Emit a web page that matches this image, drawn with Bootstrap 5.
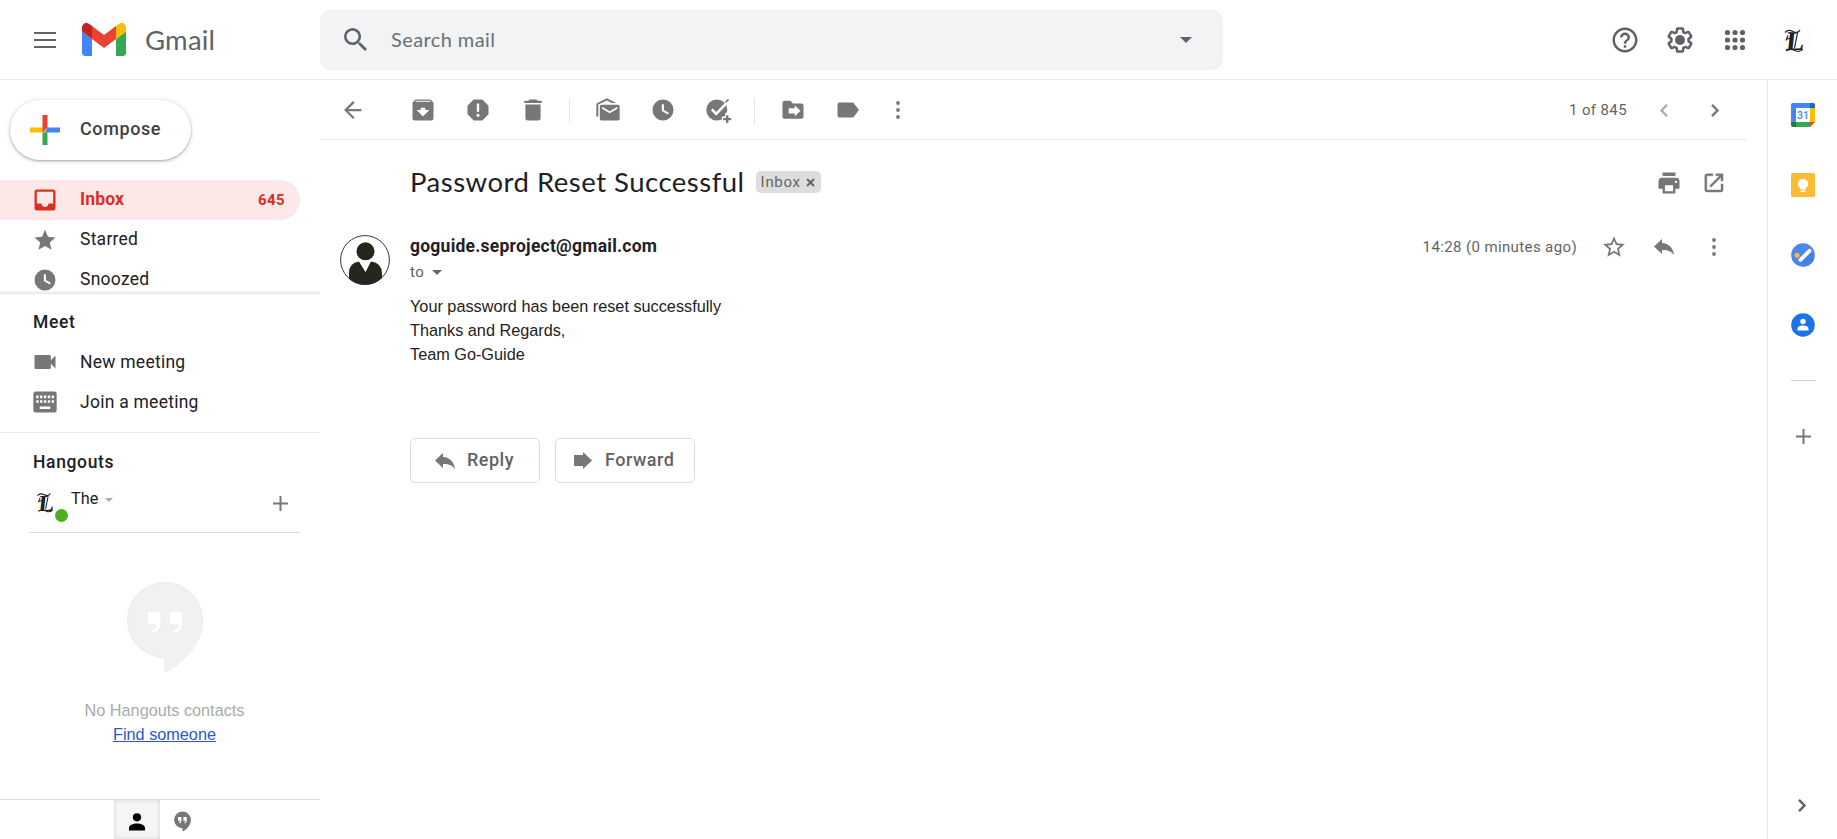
<!DOCTYPE html>
<html lang="en">
<head>
<meta charset="utf-8">
<title>Gmail</title>
<link href="https://cdn.jsdelivr.net/npm/bootstrap@5.3.0/dist/css/bootstrap.min.css" rel="stylesheet">
<style>
body{font-family:Roboto,"Liberation Sans",sans-serif;color:#202124;font-size:17.5px;background:#fff}
.app{height:839px;overflow:hidden}
svg{display:block;flex:none;overflow:visible}
span,a,h1,h2{white-space:nowrap}
.gs{font-family:Lato,Roboto,sans-serif}
.topbar{height:80px;border-bottom:1px solid #e8e9ea}
.brand{width:320px;padding-left:33px}
.brand .word{font-size:27.5px;color:#5f6368;margin-left:19px;letter-spacing:.2px}
.searchbox{width:903px;height:60px;background:#f1f3f4;border-radius:10px;padding:0 31px 0 24px;color:#6c7074;font-size:20px;letter-spacing:.4px}
.compose{width:181px;height:60px;margin:20px 0 20px 10px;border-radius:30px;padding-left:20px;box-shadow:0 1px 2px rgba(60,64,67,.35),0 1px 4px 1px rgba(60,64,67,.15);color:#3c4043;font-size:18px;font-weight:500;letter-spacing:.6px}
.side{width:320px}
.item{height:40px;padding-left:31px;padding-right:15px;width:300px;letter-spacing:.25px}
.item svg{margin-right:21px}
.item span{margin-bottom:2px}
.item.on{background:#fce8e6;color:#d93025;font-weight:700;border-radius:0 20px 20px 0;letter-spacing:.15px}
.item .count{font-size:15px;letter-spacing:.4px;margin-bottom:0}
.folders{height:111px;overflow:hidden}
.edge{height:3px;background:linear-gradient(#f7f7f7,#e6e6e6)}
.sect{font-weight:500;padding-left:33px;letter-spacing:.65px}
.rule{border-top:1px solid #e8e9ea}
.who{height:50px;margin-left:29px;width:271px;border-bottom:1px solid #dedede;font-size:16.25px}
.dot{width:13px;height:13px;background:#4fae1e;border-radius:50%;left:26px;top:24px}
.arial{font-family:"Liberation Sans",Arial,sans-serif;font-size:16.25px;line-height:24px}
.tabs{height:40px;padding-left:114px;border-top:1px solid #dadada}
.tab-on{width:46px;background:#f5f5f5;box-shadow:inset 0 0 4px #cfcfcf}
.tools{height:60px;width:1427px;padding-top:1px;border-bottom:1px solid #e8e9ea;color:#777}
.tools .slot{width:55px;height:28px}
.vline{width:1px;height:25px;background:#e4e4e4}
.sub{color:#5f6368;font-size:15px;letter-spacing:.38px}
.ttl{font-size:27.5px;line-height:35px;letter-spacing:.5px;padding-bottom:2px}
.chip{height:22px;background:#ddd;color:#666;border-radius:5px;font-size:15px;padding:0 6px 0 5px;letter-spacing:.7px}
.from{letter-spacing:.24px}
.msg{color:#222}
.btn-mail{height:45px;border:1px solid #dadce0;border-radius:5px;color:#5f6368;font-size:18px;font-weight:500;padding:0;letter-spacing:.5px}
.rail{width:70px;border-left:1px solid #e8e9ea}
.mono{font-family:"Liberation Serif",serif;font-weight:700;fill:#222}
</style>
</head>
<body>
<div class="app d-flex flex-column">
<header class="topbar d-flex align-items-center flex-shrink-0">
  <div class="brand d-flex align-items-center">
    <svg width="24" height="16" viewBox="0 0 24 16" fill="#5f6368"><path d="M1 0h22v2H1zM1 7h22v2H1zM1 14h22v2H1z"/></svg>
    <svg style="margin-left:25px" width="44" height="33" viewBox="52 42 88 66"><path fill="#4285f4" d="M58 108h14V74L52 59v43c0 3.320 2.690 6 6 6"/><path fill="#34a853" d="M120 108h14c3.320 0 6-2.690 6-6V59l-20 15"/><path fill="#fbbc04" d="M120 48v26l20-15v-8c0-7.420-8.470-11.650-14.400-7.200"/><path fill="#ea4335" d="M72 74V48l24 18 24-18v26L96 92"/><path fill="#c5221f" d="M52 51v8l20 15V48l-5.600-4.200c-5.940-4.450-14.400-.22-14.400 7.200"/></svg>
    <span class="word gs">Gmail</span>
  </div>
  <div class="searchbox d-flex align-items-center">
    <svg width="23" height="23" viewBox="3 3 17.500 17.500" fill="#5f6368"><path d="M15.500 14h-.79l-.28-.27A6.471 6.471 0 0 0 16 9.500 6.500 6.500 0 1 0 9.500 16c1.610 0 3.090-.59 4.230-1.570l.27.280v.79l5 4.990L20.490 19l-4.990-5zm-6 0C7.010 14 5 11.990 5 9.500S7.010 5 9.500 5 14 7.010 14 9.500 11.990 14 9.500 14z"/></svg>
    <span class="gs flex-grow-1" style="margin-left:24px;padding-bottom:2px">Search mail</span>
    <svg width="12" height="6" viewBox="0 0 12 6"><path fill="#5f6368" d="M0 0h12L6 6z"/></svg>
  </div>
  <div class="d-flex align-items-center ms-auto" style="gap:25px;padding-right:22px;color:#5f6368">
    <svg width="30" height="30" viewBox="0 0 24 24" fill="currentColor"><path d="M11 16.200h2v2h-2v-2zM12 2C6.480 2 2 6.480 2 12s4.480 10 10 10 10-4.480 10-10S17.520 2 12 2zm0 18c-4.410 0-8-3.590-8-8s3.590-8 8-8 8 3.590 8 8-3.590 8-8 8zm0-14a4 4 0 0 0-4 4h2c0-1.100.9-2 2-2s2 .9 2 2c0 2-3 1.750-3 5h2c0-2.250 3-2.500 3-5a4 4 0 0 0-4-4z"/></svg>
    <svg width="30" height="30" viewBox="0 0 24 24" fill="currentColor"><path d="M13.850 22.250h-3.700c-.74 0-1.360-.54-1.450-1.270l-.27-1.890c-.27-.14-.53-.29-.79-.46l-1.800.72c-.7.260-1.470-.03-1.810-.65L2.200 15.530c-.35-.66-.2-1.440.36-1.880l1.530-1.190c-.01-.15-.02-.3-.02-.46 0-.15.010-.31.020-.46l-1.520-1.190c-.59-.45-.74-1.260-.37-1.880l1.850-3.190c.34-.62 1.110-.9 1.790-.63l1.810.730c.26-.17.52-.32.780-.46l.27-1.910c.09-.7.710-1.250 1.440-1.250h3.700c.74 0 1.360.54 1.450 1.270l.27 1.890c.27.140.53.290.79.460l1.800-.72c.71-.26 1.480.03 1.820.65l1.840 3.180c.36.660.2 1.440-.36 1.880l-1.520 1.190c.01.150.02.300.02.460s-.01.310-.02.460l1.520 1.190c.56.450.72 1.230.37 1.860l-1.860 3.220c-.34.620-1.110.9-1.800.63l-1.800-.72c-.26.170-.52.320-.78.460l-.27 1.910c-.1.680-.72 1.220-1.460 1.220zm-3.230-2h2.760l.37-2.550.53-.22c.44-.18.88-.44 1.340-.78l.45-.34 2.380.96 1.380-2.400-2.030-1.580.07-.56c.03-.26.060-.51.060-.78s-.03-.53-.06-.78l-.07-.56 2.030-1.580-1.390-2.400-2.390.96-.45-.35c-.42-.32-.87-.58-1.330-.77l-.52-.22-.37-2.550h-2.760l-.37 2.550-.53.210c-.44.190-.88.440-1.340.79l-.45.330-2.380-.95-1.390 2.390 2.030 1.580-.07.560a7 7 0 0 0-.06.790c0 .26.020.530.060.78l.07.560-2.030 1.580 1.380 2.400 2.390-.96.450.350c.43.330.86.580 1.330.77l.53.220z"/><circle cx="12" cy="12" r="4"/></svg>
    <svg width="30" height="30" viewBox="0 0 30 30" fill="currentColor"><g id="d"><circle cx="7.500" cy="7.500" r="2.600"/><circle cx="15" cy="7.500" r="2.600"/><circle cx="22.500" cy="7.500" r="2.600"/></g><use href="#d" y="7.500"/><use href="#d" y="15"/></svg>
    <svg width="40" height="40" viewBox="0 0 40 40"><g id="mono"><circle cx="20" cy="20" r="19" fill="#fdfdfd"/><text class="mono" transform="translate(10.500 30) skewX(-6)" font-size="27">L</text><path d="M10 12.500q3-3.500 8-1t7-1.500M12 19l5-1M13 15.500l-2 5M22.500 13l-3 15M11 31q4-3 9-.5t8-1.500" fill="none" stroke="#222" stroke-width="1.200"/></g></svg>
  </div>
</header>
<div class="d-flex flex-grow-1" style="min-height:0">
<aside class="side d-flex flex-column flex-shrink-0">
  <button class="compose btn bg-white border-0 d-flex align-items-center flex-shrink-0">
    <svg width="30" height="30" viewBox="0 0 30 30"><path fill="#fbbc04" d="M0 12.500h12.500L17 17.500H0z"/><path fill="#4285f4" d="M17 12.500h13v5H15z"/><path fill="#34a853" d="M12.500 17.500h5V30h-5z"/><path fill="#ea4335" d="M12.500 0h5v12.500l-5 5z"/></svg>
    <span style="margin:0 0 3px 20px">Compose</span>
  </button>
  <nav class="folders flex-shrink-0">
    <div class="item on d-flex align-items-center"><svg width="28" height="28" viewBox="0 0 24 24" fill="currentColor"><path d="M19 3H5a2 2 0 0 0-2 2v14a2 2 0 0 0 2 2h14a2 2 0 0 0 2-2V5a2 2 0 0 0-2-2zm0 12h-4c0 1.660-1.350 3-3 3s-3-1.340-3-3H5V5h14v10z"/></svg><span>Inbox</span><span class="count ms-auto">645</span></div>
    <div class="item d-flex align-items-center"><svg width="28" height="28" viewBox="0 0 24 24" fill="#777"><path transform="translate(1.200 1.500) scale(.9)" d="M12 17.270 18.180 21l-1.640-7.030L22 9.240l-7.190-.61L12 2 9.190 8.630 2 9.240l5.460 4.730L5.820 21z"/></svg><span>Starred</span></div>
    <div class="item d-flex align-items-center"><svg width="28" height="28" viewBox="0 0 24 24" fill="#777"><path fill-rule="evenodd" d="M12 3a9 9 0 1 0 0 18 9 9 0 0 0 0-18zm-1 4h1.800v5l4.200 2.400-.8 1.500-5.200-3z"/></svg><span>Snoozed</span></div>
  </nav>
  <div class="edge flex-shrink-0"></div>
  <div class="sect d-flex align-items-center" style="height:48px;padding-top:8px"><span>Meet</span></div>
  <div class="item d-flex align-items-center"><svg width="28" height="28" viewBox="0 0 24 24" fill="#777"><path d="M17 10.500V7a1 1 0 0 0-1-1H4a1 1 0 0 0-1 1v10a1 1 0 0 0 1 1h12a1 1 0 0 0 1-1v-3.500l4 4v-11z"/></svg><span class="mb-0">New meeting</span></div>
  <div class="item d-flex align-items-center"><svg width="28" height="28" viewBox="0 0 24 24" fill="#777"><path fill-rule="evenodd" d="M20 3H4a2 2 0 0 0-2 2v14a2 2 0 0 0 2 2h16a2 2 0 0 0 2-2V5a2 2 0 0 0-2-2zM4.500 6.500h2v2.200h-2zm3.300 0h2v2.200h-2zm3.300 0h2v2.200h-2zm3.300 0h2v2.200h-2zm3.300 0h2v2.200h-2zM4.500 10.500h2v2.200h-2zm3.300 0h2v2.200h-2zm3.300 0h2v2.200h-2zm3.300 0h2v2.200h-2zm3.300 0h2v2.200h-2zM7.500 15.800h9v2.200h-9z"/></svg><span class="mb-0">Join a meeting</span></div>
  <div class="rule" style="margin-top:10px"></div>
  <div class="sect d-flex align-items-center" style="height:50px;padding-top:8px"><span>Hangouts</span></div>
  <div class="who d-flex align-items-center position-relative">
    <div class="position-relative" style="width:34px;height:46px"><svg width="34" height="34" viewBox="0 0 40 40"><use href="#mono"/></svg><span class="dot position-absolute"></span></div>
    <span style="margin-left:8px;margin-top:-17px">The</span>
    <svg style="margin-left:7px;margin-top:-15px" width="8" height="4" viewBox="0 0 8 4"><path fill="#aaa" d="M0 0h8L4 4z"/></svg>
    <svg class="ms-auto" style="margin-right:12px;margin-top:-8px" width="15" height="15" viewBox="0 0 15 15"><path fill="#777" d="M6.500 0h2v6.500H15v2H8.500V15h-2V8.500H0v-2h6.500z"/></svg>
  </div>
  <div class="arial d-flex flex-column align-items-center" style="padding:49px 0 0 9px">
    <svg width="76" height="90" viewBox="0 0 76 90"><path fill="#f1f1f1" stroke="#ebebeb" fill-rule="evenodd" d="M38 .5a37.500 37.500 0 1 0 0 75V90C56 81 75.500 62 75.500 38A37.500 37.500 0 0 0 38 .5zM22 29h10q2 0 2 2v11q0 9-11 10v-4q6-1 6-5h-7q-2 0-2-2V31q0-2 2-2zm22 0h10q2 0 2 2v11q0 9-11 10v-4q6-1 6-5h-7q-2 0-2-2V31q0-2 2-2z"/></svg>
    <span style="margin-top:26px;color:#aaa">No Hangouts contacts</span>
    <a href="#" style="color:#2a56d0">Find someone</a>
  </div>
  <div class="tabs d-flex mt-auto flex-shrink-0">
    <div class="tab-on d-flex align-items-center justify-content-center pt-1"><svg width="16" height="18" viewBox="0 0 16 18"><circle cx="8" cy="4.300" r="4.100"/><path d="M0 17.500V15c0-3 4-4.500 8-4.500s8 1.500 8 4.500v2.500z"/></svg></div>
    <div class="d-flex align-items-center" style="padding:3px 0 0 14px"><svg width="17" height="21" viewBox="0 0 76 90"><path fill="#777" fill-rule="evenodd" d="M38 .5a37.500 37.500 0 1 0 0 75V90C56 81 75.500 62 75.500 38A37.500 37.500 0 0 0 38 .5zM18 25h15v18q0 9-10 11v-6q5-2 5-6H18zm24 0h15v18q0 9-10 11v-6q5-2 5-6H42z"/></svg></div>
  </div>
</aside>
<main class="flex-grow-1">
  <div class="tools d-flex align-items-center">
    <div style="width:75px;padding-left:19px"><svg width="28" height="28" viewBox="0 0 24 24" fill="currentColor"><path d="M19.500 11H7.800l5.600-5.600L12 4l-8 8 8 8 1.400-1.400L7.800 13h11.700z" transform="translate(.5 .5) scale(.96)"/></svg></div>
    <div class="slot d-flex justify-content-center"><svg width="28" height="28" viewBox="0 0 24 24" fill="currentColor"><path d="m20.540 5.230-1.390-1.680A1.450 1.450 0 0 0 18 3H6c-.47 0-.88.210-1.160.55L3.460 5.230C3.170 5.570 3 6.020 3 6.500V19a2 2 0 0 0 2 2h14a2 2 0 0 0 2-2V6.500c0-.48-.17-.93-.46-1.270zM12 17.500 6.500 12H10v-2h4v2h3.500zM5.120 5l.81-1h12l.94 1z"/></svg></div>
    <div class="slot d-flex justify-content-center"><svg width="28" height="28" viewBox="0 0 24 24" fill="currentColor"><path fill-rule="evenodd" d="M15.730 3H8.270L3 8.270v7.460L8.270 21h7.460L21 15.730V8.270zM11 6.500h2v7h-2zM12 15.200a1.350 1.350 0 1 1 0 2.700 1.350 1.350 0 0 1 0-2.700z"/></svg></div>
    <div class="slot d-flex justify-content-center"><svg width="28" height="28" viewBox="0 0 24 24" fill="currentColor"><path d="M5.500 19a2 2 0 0 0 2 2h9a2 2 0 0 0 2-2V7.200h-13zM19.500 4H16l-1-1H9L8 4H4.500v2h15z"/></svg></div>
    <div class="vline" style="margin:0 10px 0 9px"></div>
    <div class="slot d-flex justify-content-center"><svg width="28" height="28" viewBox="0 0 24 24" fill="currentColor"><path d="M3.700 17.500H2V7.500c0-.8.300-1.300.900-1.600L11 2l8 4h-3.800L11 3.900 3.700 7.300z"/><path fill-rule="evenodd" d="M6.500 7.500h14a1.500 1.500 0 0 1 1.500 1.500v10.500a1.500 1.500 0 0 1-1.500 1.500h-14A1.500 1.500 0 0 1 5 19.500V9a1.500 1.500 0 0 1 1.500-1.500zM7 9.300v1.700l6.500 3.800L20 11V9.300L13.500 13z"/></svg></div>
    <div class="slot d-flex justify-content-center"><svg width="28" height="28" viewBox="0 0 24 24" fill="currentColor"><path fill-rule="evenodd" d="M12 3a9 9 0 1 0 0 18 9 9 0 0 0 0-18zm-1 4h1.800v5l4.200 2.400-.8 1.500-5.200-3z"/></svg></div>
    <div class="slot d-flex justify-content-center"><svg width="28" height="28" viewBox="0 0 24 24"><circle cx="11" cy="12" r="9" fill="#777"/><path d="m6.700 11.500 3.800 3.800L20.500 4.800" fill="none" stroke="#fff" stroke-width="2.200"/><path d="m18.500 5.500 2.500-2.700" stroke="#777" stroke-width="1.400"/><path d="M15.300 17.500h3v-3.200h5V23h-8z" fill="#fff"/><path d="M18.900 16.500h2v2.400h2.400v1.900h-2.400v2.400h-2v-2.400h-2.400v-1.900h2.400z" fill="#777"/></svg></div>
    <div class="vline" style="margin:0 10px 0 9px"></div>
    <div class="slot d-flex justify-content-center"><svg width="28" height="28" viewBox="0 0 24 24" fill="currentColor"><path fill-rule="evenodd" d="M19.200 6.400h-7.400L10 4H4.800A1.800 1.800 0 0 0 3 5.800v11.900a1.800 1.800 0 0 0 1.800 1.800h14.400a1.800 1.800 0 0 0 1.800-1.800V8.200a1.800 1.800 0 0 0-1.800-1.800zM13.500 17.500V15H8.300v-4.500h5.200V8l4.900 4.700z"/></svg></div>
    <div class="slot d-flex justify-content-center"><svg width="28" height="28" viewBox="0 0 24 24" fill="currentColor"><path d="M17 6.200c-.35-.5-.9-.7-1.500-.7H4.700A1.700 1.700 0 0 0 3 7.200v9.600a1.700 1.700 0 0 0 1.700 1.700h10.800c.6 0 1.150-.2 1.500-.7l4.300-5.800z"/></svg></div>
    <div class="slot d-flex justify-content-center align-items-center" style="width:45px"><svg width="4" height="18" viewBox="0 0 4 18" fill="currentColor"><circle cx="2" cy="2" r="1.900"/><circle cx="2" cy="9" r="1.900"/><circle cx="2" cy="16" r="1.900"/></svg></div>
    <span class="sub ms-auto">1 of 845</span>
    <svg style="margin-left:33px" width="8" height="13" viewBox="0 0 8 13"><path fill="none" stroke="#aaa" stroke-width="2.200" d="M7 .8 1.500 6.500 7 12.200"/></svg>
    <svg style="margin:0 28px 0 43px" width="8" height="13" viewBox="0 0 8 13"><path fill="none" stroke="#777" stroke-width="2.400" d="M1 .8l5.500 5.700L1 12.200"/></svg>
  </div>
  <div class="d-flex align-items-center" style="height:85px;width:1427px;padding-left:90px">
    <h1 class="ttl gs m-0 fw-normal">Password Reset Successful</h1>
    <div class="chip d-flex align-items-center" style="margin:0 0 1px 11px"><span>Inbox</span><svg style="margin-left:5px" width="9" height="9" viewBox="0 0 9 9"><path stroke="#666" stroke-width="2" d="m1 1 7 7M8 1 1 8"/></svg></div>
    <svg class="ms-auto" width="28" height="28" viewBox="0 0 24 24" fill="#777"><path fill-rule="evenodd" d="M6.500 3h11v3h-11zM18 7.500H6a3 3 0 0 0-3 3V17h3.500v4h11v-4H21v-6.500a3 3 0 0 0-3-3zM15.500 19h-7v-5h7zM18 12a1 1 0 1 1 0-2 1 1 0 0 1 0 2z"/></svg>
    <svg style="margin:0 18px 0 16px" width="30" height="28" viewBox="0 0 24 24" fill="#777"><path transform="translate(1.500 1.500) scale(.87)" d="M19 19H5V5h6V3H5a2 2 0 0 0-2 2v14a2 2 0 0 0 2 2h14a2 2 0 0 0 2-2v-6h-2zM14 3v2h3.590l-9.830 9.830 1.410 1.410L19 6.410V10h2V3z" stroke="#777" stroke-width=".4"/></svg>
  </div>
  <div class="d-flex" style="width:1427px;padding:10px 0 0 20px">
    <svg width="50" height="50" viewBox="0 0 50 50"><defs><clipPath id="c"><circle cx="25" cy="25" r="24.800"/></clipPath></defs><circle cx="25" cy="25" r="24.400" fill="#fff" stroke="#333" stroke-width="1"/><g clip-path="url(#c)" fill="#25261e"><circle cx="25.500" cy="16.300" r="9"/><path d="M9 50V38q0-10 10-11.500L25.500 37 31 26.500q11 1.500 11 12V50z"/></g></svg>
    <div class="flex-grow-1" style="margin-left:20px">
      <div class="d-flex align-items-center" style="height:24px">
        <span class="from fw-bold" style="margin-bottom:2px">goguide.seproject@gmail.com</span>
        <span class="sub ms-auto">14:28 (0 minutes ago)</span>
        <svg style="margin-left:24px" width="26" height="26" viewBox="0 0 24 24" fill="#777"><path d="m22 9.240-7.190-.62L12 2 9.190 8.630 2 9.240l5.460 4.730L5.820 21 12 17.270 18.180 21l-1.630-7.030zM12 15.400l-3.760 2.270 1-4.280-3.320-2.880 4.380-.38L12 6.100l1.710 4.040 4.380.38-3.320 2.880 1 4.280z"/></svg>
        <svg style="margin-left:27px" width="20" height="16" viewBox="0 0 20 16" fill="#777"><path d="M8 4V0L0 7.500 8 15v-4c5.500-.3 9 1 12 5-1-7-5-11.500-12-12z"/></svg>
        <svg style="margin:0 31px 0 38px" width="4" height="18" viewBox="0 0 4 18" fill="#777"><circle cx="2" cy="2" r="1.900"/><circle cx="2" cy="9" r="1.900"/><circle cx="2" cy="16" r="1.900"/></svg>
      </div>
      <div class="d-flex align-items-center sub" style="height:26px"><span>to</span><svg style="margin-left:8px" width="10" height="5" viewBox="0 0 10 5"><path fill="#666" d="M0 0h10L5 5z"/></svg></div>
      <div class="msg arial" style="margin-top:9px"><span>Your password has been reset successfully</span><br><span>Thanks and Regards,</span><br><span>Team Go-Guide</span></div>
      <div class="d-flex" style="gap:15px;margin-top:72px">
        <button class="btn btn-mail d-flex align-items-center" style="width:130px;padding-left:24px"><svg width="20" height="16" viewBox="0 0 20 16" fill="#777"><path d="M8 4V0L0 7.500 8 15v-4c5.500-.3 9 1 12 5-1-7-5-11.500-12-12z"/></svg><span style="margin:0 0 3px 12px">Reply</span></button>
        <button class="btn btn-mail d-flex align-items-center" style="width:140px;padding-left:18px"><svg width="18" height="17" viewBox="0 0 18 17" fill="#777"><path d="M0 3h9V0l9 8.500L9 17v-3H0z"/></svg><span style="margin:0 0 3px 13px">Forward</span></button>
      </div>
    </div>
  </div>
</main>
<aside class="rail d-flex flex-column align-items-center flex-shrink-0" style="padding:23px 0 21px 1px">
  <svg width="24" height="24" viewBox="0 0 24 24"><path fill="#4285f4" d="M2 0h17v5H5v14H0V2q0-2 2-2z"/><path fill="#1967d2" d="M19 0h3q2 0 2 2v3h-5z"/><path fill="#fbbc04" d="M19 5h5v14h-5z"/><path fill="#34a853" d="M5 19h14v5H5z"/><path fill="#188038" d="M0 19h5v5H2q-2 0-2-2z"/><path fill="#ea4335" d="M19 19h5l-5 5z"/><path fill="#fff" d="M5 5h14v14H5z"/><text x="12" y="16" font-size="10.500" font-weight="500" fill="#4285f4" text-anchor="middle" font-family="Roboto">31</text></svg>
  <svg style="margin-top:46px" width="24" height="24" viewBox="0 0 24 24"><rect width="24" height="24" rx="1.500" fill="#fbbc35"/><path fill="#fff" d="M12 6a5 5 0 0 0-2.700 9.300V16.500h5.400v-1.200A5 5 0 0 0 12 6zM9.500 17.500h5V19h-5z"/></svg>
  <svg style="margin-top:46px" width="24" height="24" viewBox="0 0 24 24"><circle cx="12" cy="12" r="11.800" fill="#4d86f0"/><path d="m9 18 11-10 3.500 6A12 12 0 0 1 14 23.600z" fill="#4580e8"/><path d="m9.500 16.800 9-9" stroke="#fff" stroke-width="3.800" stroke-linecap="round"/><circle cx="6" cy="12.200" r="2.500" fill="#fbbc35"/></svg>
  <svg style="margin-top:46px" width="24" height="24" viewBox="0 0 24 24"><circle cx="12" cy="12" r="11.800" fill="#1a73e8"/><circle cx="12" cy="8.500" r="2.700" fill="#fff"/><path fill="#fff" d="M6.500 17.500v-1.800c0-2 2.700-3.200 5.500-3.200s5.500 1.200 5.500 3.200v1.800z"/></svg>
  <div style="width:25px;height:1px;background:#d0d0d0;margin-top:43px"></div>
  <svg style="margin-top:48px" width="15" height="15" viewBox="0 0 15 15"><path fill="#777" d="M6.500 0h2v6.500H15v2H8.500V15h-2V8.500H0v-2h6.500z"/></svg>
  <svg class="mt-auto" style="margin:0 2px 6px 0" width="8" height="13" viewBox="0 0 8 13"><path fill="none" stroke="#5f6368" stroke-width="2.400" d="M1 .8l5.500 5.700L1 12.200"/></svg>
</aside>
</div>
</div>
<script src="https://cdn.jsdelivr.net/npm/bootstrap@5.3.0/dist/js/bootstrap.bundle.min.js"></script>
</body>
</html>
